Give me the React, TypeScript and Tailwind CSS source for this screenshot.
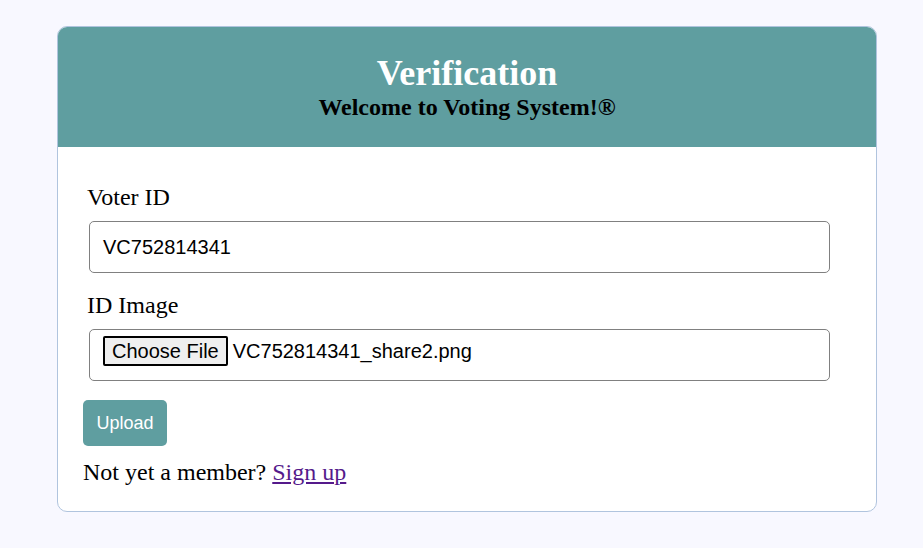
export default function App() {
  return (
    <div className="min-h-[548px] bg-[#f8f8ff] pt-[26px] pl-[57px]">
      <div className="w-[820px] overflow-hidden rounded-[10px] border border-[#b0c4de] bg-white">
        <div className="h-[120px] bg-[#5f9ea0] pt-[26px] text-center font-['Liberation_Serif',serif] font-bold">
          <div className="text-[36px] leading-[40px] text-white">Verification</div>
          <div className="text-[24px] leading-[28px] text-black">Welcome to Voting System!®</div>
        </div>
        <div className="pl-[25px] pt-[36px] pb-[25px] font-['Liberation_Serif',serif] text-[24px] text-black">
          <label className="ml-[4px] block leading-[28px]">Voter ID</label>
          <div className="ml-[6px] mt-[10px] flex h-[52px] w-[741px] items-center rounded-[5px] border border-[#808080] px-[13px] font-['Liberation_Sans',Arial,sans-serif] text-[20px]">
            VC752814341
          </div>
          <label className="ml-[4px] mt-[18px] block leading-[28px]">ID Image</label>
          <div className="ml-[6px] mt-[10px] h-[52px] w-[741px] rounded-[5px] border border-[#808080] px-[13px] pt-[6px] font-['Liberation_Sans',Arial,sans-serif] text-[20px]">
            <div className="flex h-[30px] items-center">
              <span className="flex h-[30px] items-center rounded-[2px] border-2 border-black bg-[#efefef] px-[7px] leading-none">
                Choose File
              </span>
              <span className="ml-[5px] leading-none">VC752814341_share2.png</span>
            </div>
          </div>
          <button className="mt-[19px] block h-[46px] w-[84px] rounded-[5px] bg-[#5f9ea0] font-['Liberation_Sans',Arial,sans-serif] text-[18px] text-white">
            Upload
          </button>
          <p className="mt-[12px] leading-[28px]">
            Not yet a member?{" "}
            <a href="#" className="text-[#551a8b] underline">
              Sign up
            </a>
          </p>
        </div>
      </div>
    </div>
  );
}
